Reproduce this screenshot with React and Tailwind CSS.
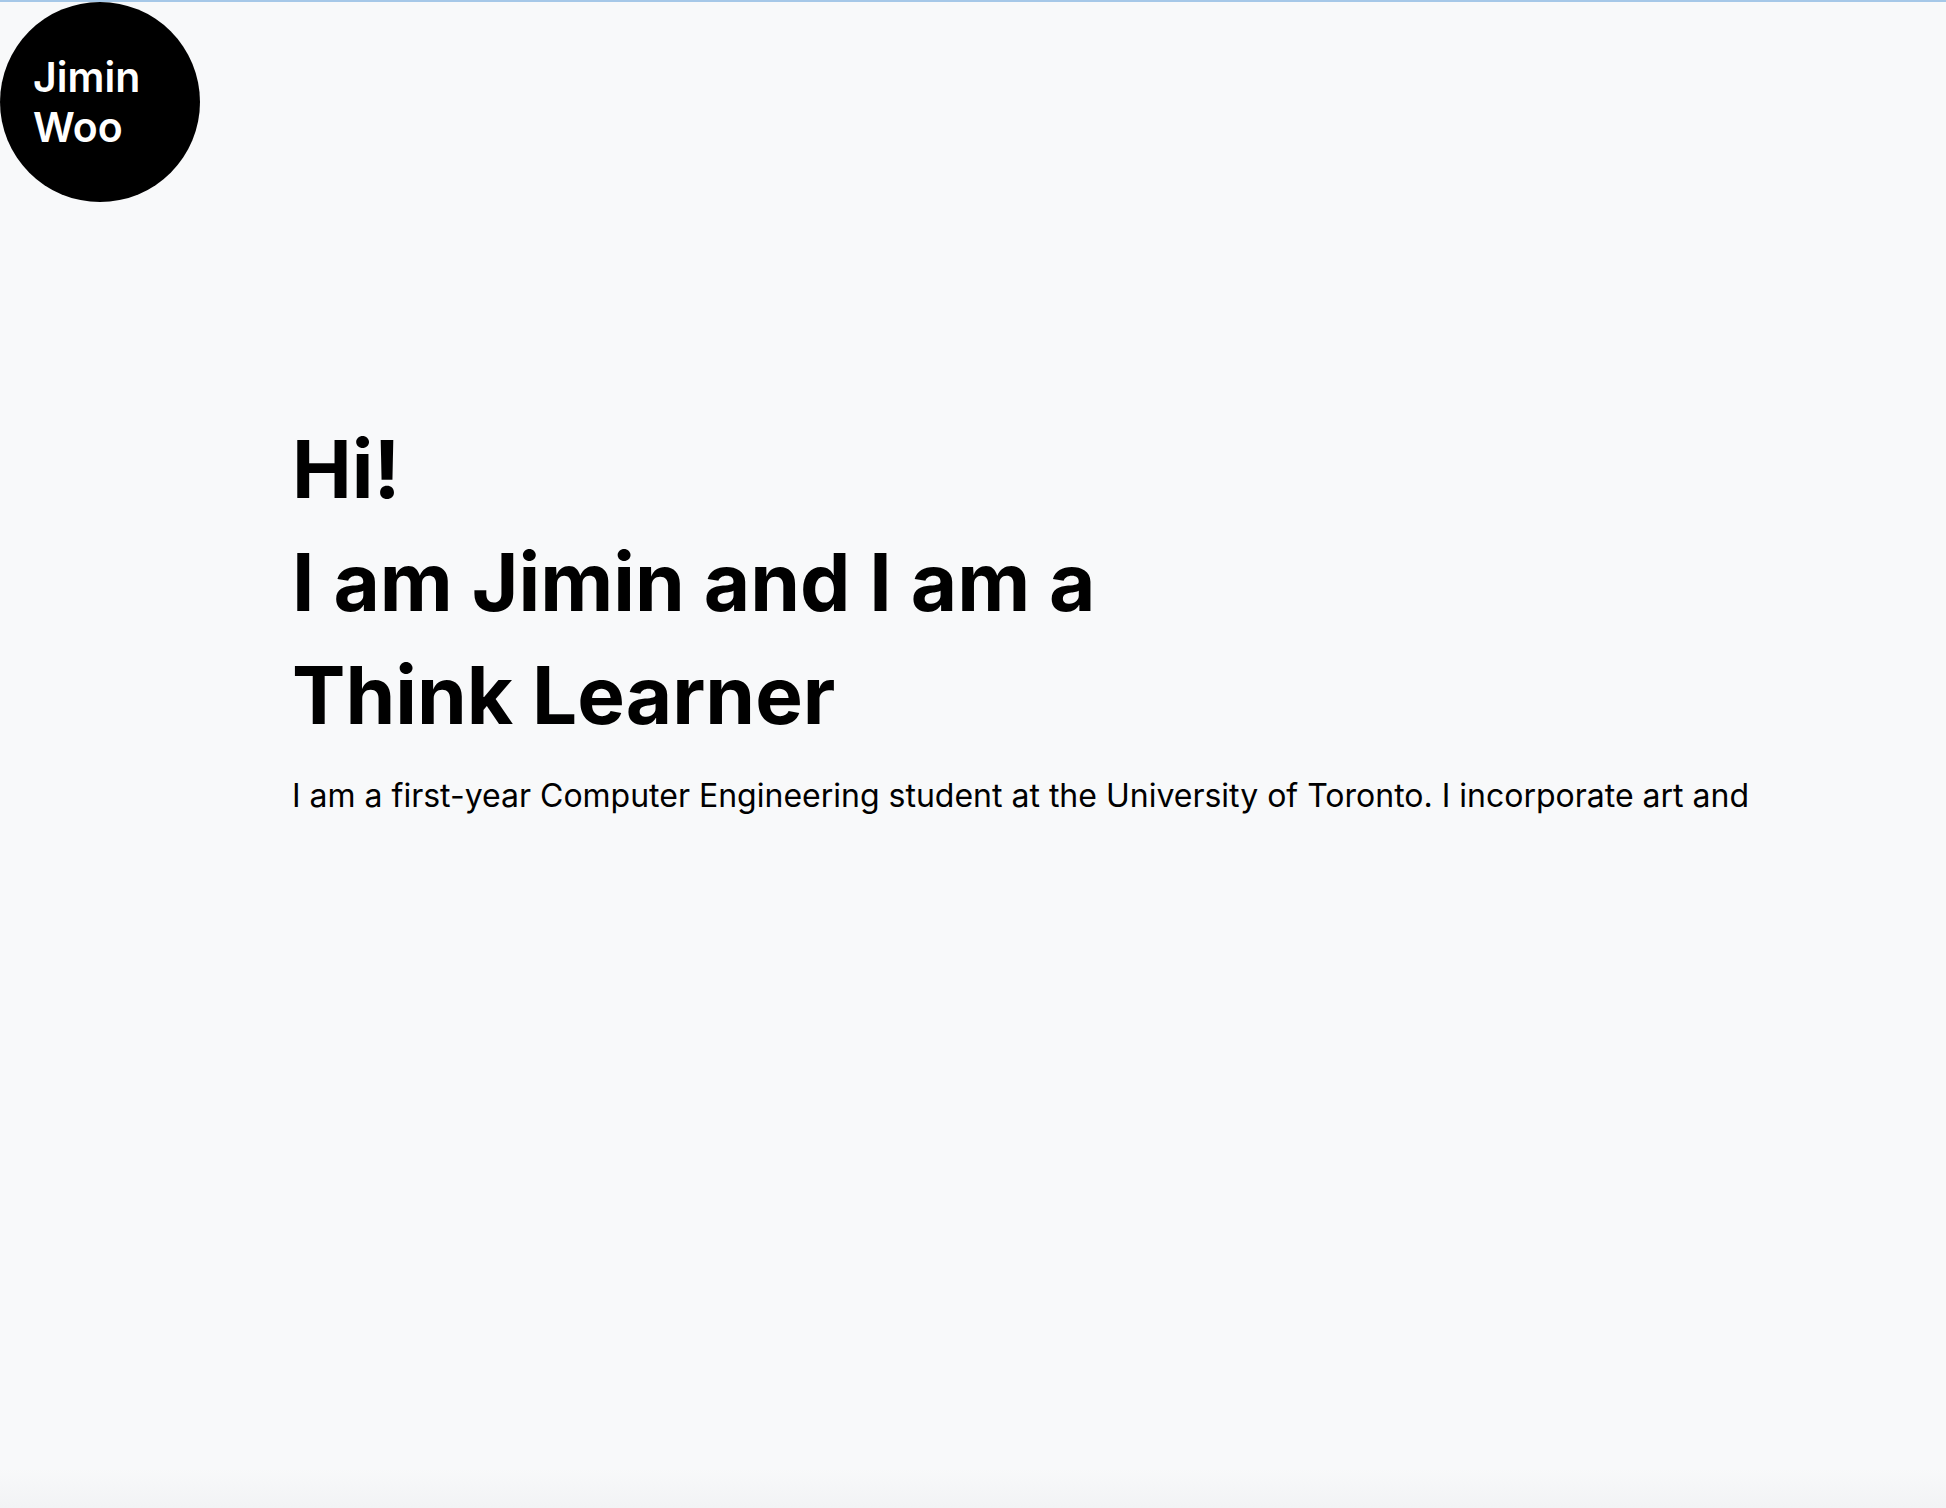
import React from "react";

export default function App() {
  return (
    <div
      className="min-h-[1508px] w-full bg-[#f8f9fa] border-t-2 border-[#a6c8e8] relative overflow-hidden"
      style={{ fontFamily: "Inter, 'Noto Sans', sans-serif" }}
    >
      {/* logo bubble */}
      <div className="w-[200px] h-[200px] rounded-full bg-black flex items-center pl-[33px]">
        <span className="text-white text-[41px] leading-[50px] font-semibold">
          Jimin
          <br />
          Woo
        </span>
      </div>

      <main className="pl-[292px] pt-[210px]">
        <h1 className="text-[80px] leading-[113px] font-bold text-black">
          Hi!
          <br />
          I am Jimin and I am a
          <br />
          Think Learner
        </h1>
        <p className="mt-[21px] text-[32px] leading-[48px] text-black whitespace-nowrap">
          I am a first-year Computer Engineering student at the University of Toronto. I incorporate art and
        </p>
      </main>

      <div className="absolute bottom-0 left-0 right-0 h-[40px] bg-gradient-to-b from-transparent to-[#f2f3f5]" />
    </div>
  );
}
